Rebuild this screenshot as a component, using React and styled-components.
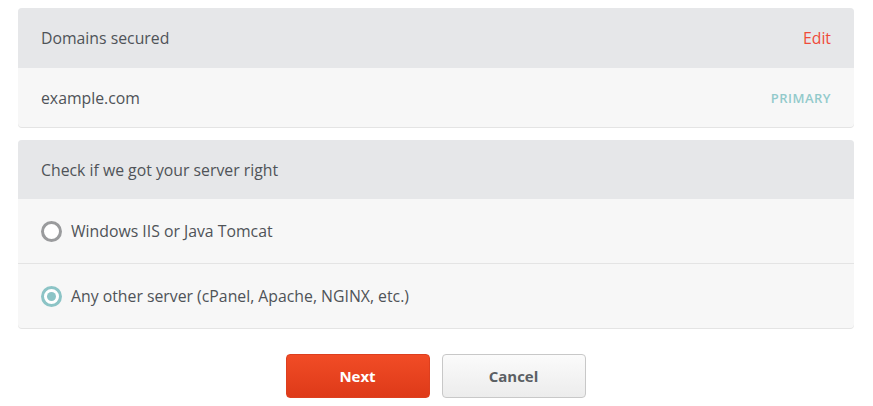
import React, { useState } from 'react'
import styled, { createGlobalStyle } from 'styled-components'

const Global = createGlobalStyle`
  body {
    margin: 0;
    background: #fff;
    font-family: "Open Sans", Lato, Arial, sans-serif;
    color: #555a60;
  }
`

const Page = styled.div`
  padding: 8px 19px 0 18px;
  display: flex;
  flex-direction: column;
  gap: 13px;
`

const Card = styled.div`
  border-radius: 4px;
  background: #f7f7f7;
  box-shadow: 0 1px 0 #e4e4e4;
  overflow: hidden;
`

const Header = styled.div`
  height: ${p => p.h || 60}px;
  background: #e6e7e9;
  display: flex;
  align-items: center;
  justify-content: space-between;
  padding: 0 23px;
  font-size: 15.8px;
  color: #4f5358;
`

const EditLink = styled.a`
  color: #ef4b3a;
  font-size: 15.8px;
  cursor: pointer;
`

const Row = styled.div`
  height: ${p => p.h || 59}px;
  display: flex;
  align-items: center;
  justify-content: space-between;
  padding: 0 23px;
  font-size: 15.8px;
  color: #4f5358;
  & + & {
    border-top: 1px solid #e4e4e4;
  }
`

const Tag = styled.span`
  font-size: 13px;
  font-weight: 600;
  letter-spacing: 0.5px;
  color: #92cacb;
`

const RadioLabel = styled.label`
  display: flex;
  align-items: center;
  gap: 9px;
  cursor: pointer;
`

const RadioDot = styled.span`
  width: 21px;
  height: 21px;
  box-sizing: border-box;
  border-radius: 50%;
  border: 3px solid ${p => (p.checked ? '#8cc4c6' : '#9a9b9d')};
  background: #fff;
  display: flex;
  align-items: center;
  justify-content: center;
  &::after {
    content: '';
    width: 9px;
    height: 9px;
    border-radius: 50%;
    background: ${p => (p.checked ? '#8cc4c6' : 'transparent')};
  }
`

const Actions = styled.div`
  display: flex;
  justify-content: center;
  gap: 12px;
  margin-top: 13px;
  padding-right: 1px;
`

const Button = styled.button`
  width: 144px;
  height: 44px;
  border-radius: 4px;
  font-family: "Open Sans", Lato, Arial, sans-serif;
  font-size: 15px;
  font-weight: 700;
  cursor: pointer;
  border: 1px solid ${p => (p.primary ? '#dd3f1f' : '#c8c8c8')};
  color: ${p => (p.primary ? '#fff' : '#5b5f64')};
  background: ${p =>
    p.primary
      ? 'linear-gradient(#f14c26, #de3a19)'
      : 'linear-gradient(#fbfbfb, #ececec)'};
`

const servers = [
  { id: 'iis', label: 'Windows IIS or Java Tomcat' },
  { id: 'other', label: 'Any other server (cPanel, Apache, NGINX, etc.)' },
]

export default function App() {
  const [server, setServer] = useState('other')
  return (
    <Page>
      <Global />
      <Card>
        <Header>
          <span>Domains secured</span>
          <EditLink>Edit</EditLink>
        </Header>
        <Row>
          <span>example.com</span>
          <Tag>PRIMARY</Tag>
        </Row>
      </Card>
      <Card>
        <Header h={59}>
          <span>Check if we got your server right</span>
        </Header>
        {servers.map(s => (
          <Row key={s.id} h={64} onClick={() => setServer(s.id)}>
            <RadioLabel>
              <RadioDot checked={server === s.id} />
              {s.label}
            </RadioLabel>
          </Row>
        ))}
      </Card>
      <Actions>
        <Button primary>Next</Button>
        <Button>Cancel</Button>
      </Actions>
    </Page>
  )
}
